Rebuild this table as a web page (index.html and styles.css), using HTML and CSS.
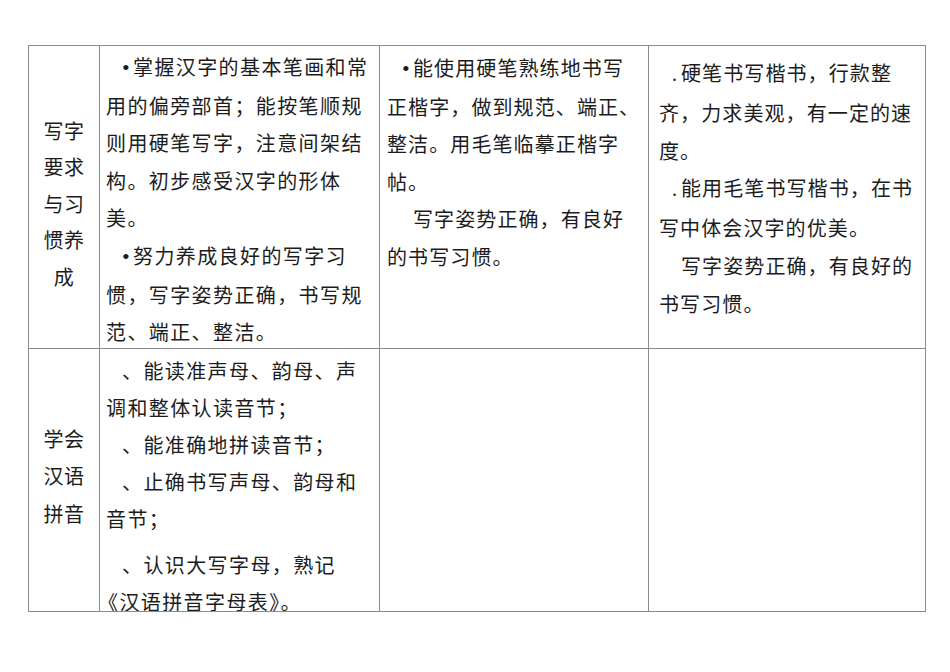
FILE: index.html
```html
<!DOCTYPE html>
<html lang="zh-CN">
<head>
<meta charset="utf-8">
<title>写字与拼音</title>
<link rel="stylesheet" href="styles.css">
</head>
<body>
<div class="sheet">
  <div class="grid">
    <div class="cell head head-1">写字<br>要求<br>与习<br>惯养<br>成</div>
    <div class="cell body c2 r1">
      <p class="ind-b"><span class="dot">•</span>掌握汉字的基本笔画和常<br>用的偏旁部首；能按笔顺规<br>则用硬笔写字，注意间架结<br>构。初步感受汉字的形体<br>美。</p>
      <p class="ind-b"><span class="dot">•</span>努力养成良好的写字习<br>惯，写字姿势正确，书写规<br>范、端正、整洁。</p>
    </div>
    <div class="cell body c3 r1">
      <p class="ind-b3"><span class="dot">•</span>能使用硬笔熟练地书写<br>正楷字，做到规范、端正、<br>整洁。用毛笔临摹正楷字<br>帖。</p>
      <p class="ind-2">写字姿势正确，有良好<br>的书写习惯。</p>
    </div>
    <div class="cell body c4 r1">
      <p class="ind-p"><span class="per">.</span>硬笔书写楷书，行款整<br>齐，力求美观，有一定的速<br>度。</p>
      <p class="ind-p"><span class="per">.</span>能用毛笔书写楷书，在书<br>写中体会汉字的优美。</p>
      <p class="ind-1">写字姿势正确，有良好的<br>书写习惯。</p>
    </div>

    <div class="cell head head-2">学会<br>汉语<br>拼音</div>
    <div class="cell body c2 r2">
      <p class="ind-d">、能读准声母、韵母、声<br>调和整体认读音节；</p>
      <p class="ind-d">、能准确地拼读音节；</p>
      <p class="ind-d">、止确书写声母、韵母和<br>音节；</p>
      <p class="ind-d last">、认识大写字母，熟记<br><span class="quote">《汉语拼音字母表》。</span></p>
    </div>
    <div class="cell body c3 r2"></div>
    <div class="cell body c4 r2"></div>
  </div>
</div>
</body>
</html>
```

FILE: styles.css
```css
html, body {
  margin: 0;
  padding: 0;
  background: #ffffff;
}

body {
  font-family: "Noto Sans CJK SC", "Noto Sans", sans-serif;
  color: #1c1c1c;
}

.sheet {
  padding: 45px 0 0 28px;
}

.grid {
  display: grid;
  grid-template-columns: 71px 280px 269px 277px;
  grid-template-rows: 303px 263px;
  width: 898px;
  border-top: 1px solid #8c8c8c;
  border-left: 1px solid #8c8c8c;
  box-sizing: border-box;
}

.cell {
  border-right: 1px solid #8c8c8c;
  border-bottom: 1px solid #8c8c8c;
  box-sizing: border-box;
  overflow: hidden;
  font-size: 20px;
}

.head {
  display: flex;
  align-items: center;
  justify-content: center;
  text-align: center;
  letter-spacing: 0.5px;
  line-height: 36.5px;
}

.head-1 {
  padding-top: 14px;
}

.head-2 {
  padding-bottom: 8px;
  line-height: 37.5px;
}

.body p {
  margin: 0;
  white-space: nowrap;
}

.c2 {
  padding: 2px 0 0 6px;
  letter-spacing: 1.4px;
  line-height: 37.6px;
}

.c2.r2 {
  line-height: 37px;
  padding-top: 3px;
}

.c3 {
  padding: 3px 0 0 7px;
  letter-spacing: 1.1px;
  line-height: 37.5px;
}

.c4 {
  padding: 8px 0 0 10px;
  letter-spacing: 1.1px;
  line-height: 37.8px;
}

.dot, .per {
  display: inline-block;
  font-family: "Liberation Serif", serif;
  letter-spacing: 0;
  text-indent: 0;
  color: #1c1c1c;
}

.dot {
  width: 11px;
  font-size: 22px;
}

.per {
  width: 9px;
}

.ind-b {
  text-indent: 16px;
}

.ind-b3 {
  text-indent: 15px;
}

.ind-2 {
  text-indent: 26px;
}

.ind-p {
  text-indent: 13px;
}

.ind-1 {
  text-indent: 22px;
}

.ind-d {
  text-indent: 16px;
}

.last {
  margin-top: 9px !important;
}

.quote {
  display: inline-block;
  margin-left: -8px;
  text-indent: 0;
}
```
